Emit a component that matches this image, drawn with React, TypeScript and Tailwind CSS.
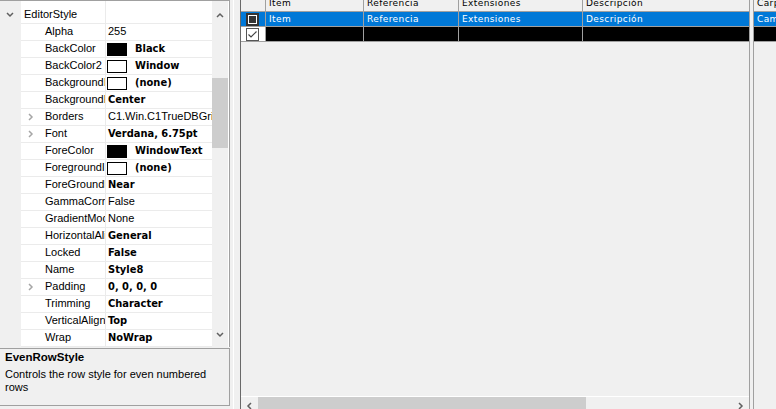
type Prop = {
  name: string
  value: string
  bold?: boolean
  swatch?: "black" | "white"
  expand?: boolean
}

const props: Prop[] = [
  { name: "Alpha", value: "255" },
  { name: "BackColor", value: "Black", bold: true, swatch: "black" },
  { name: "BackColor2", value: "Window", bold: true, swatch: "white" },
  { name: "BackgroundImage", value: "(none)", bold: true, swatch: "white" },
  { name: "BackgroundPictureDrawMode", value: "Center", bold: true },
  { name: "Borders", value: "C1.Win.C1TrueDBGrid.GridBorders", expand: true },
  { name: "Font", value: "Verdana, 6.75pt", bold: true, expand: true },
  { name: "ForeColor", value: "WindowText", bold: true, swatch: "black" },
  { name: "ForegroundImage", value: "(none)", bold: true, swatch: "white" },
  { name: "ForeGroundPicturePosition", value: "Near", bold: true },
  { name: "GammaCorrection", value: "False" },
  { name: "GradientMode", value: "None" },
  { name: "HorizontalAlignment", value: "General", bold: true },
  { name: "Locked", value: "False", bold: true },
  { name: "Name", value: "Style8", bold: true },
  { name: "Padding", value: "0, 0, 0, 0", bold: true, expand: true },
  { name: "Trimming", value: "Character", bold: true },
  { name: "VerticalAlignment", value: "Top", bold: true },
  { name: "Wrap", value: "NoWrap", bold: true },
]

const cols = [
  { title: "Item", w: "w-[98px]" },
  { title: "Referencia", w: "w-[95px]" },
  { title: "Extensiones", w: "w-[124px]" },
  { title: "Descripción", w: "w-[166px]" },
]

const Chevron = ({ dir, color }: { dir: "up" | "down" | "left" | "right"; color: string }) => {
  const pts = {
    up: "1,5 4,2 7,5",
    down: "1,1 4,4 7,1",
    left: "5,1 2,4 5,7",
    right: "2,1 5,4 2,7",
  }[dir]
  const size = dir === "up" || dir === "down" ? { w: 8, h: 6 } : { w: 7, h: 8 }
  return (
    <svg width={size.w} height={size.h} viewBox={`0 0 ${size.w} ${size.h}`} className="block">
      <polyline points={pts} fill="none" stroke={color} strokeWidth="1.5" />
    </svg>
  )
}

const PropRow = ({ p }: { p: Prop }) => (
  <div className="flex h-[17px]">
    <div className="w-[21px] shrink-0 bg-[#f0f0f0]" />
    <div className="flex flex-1 border-b border-[#ebebeb]">
      <div className="flex w-[85px] shrink-0 overflow-hidden whitespace-nowrap border-r border-[#ebebeb] leading-[15px]">
        <div className="flex w-[24px] shrink-0 items-center pl-[6px]">
          {p.expand && <Chevron dir="right" color="#a6a6a6" />}
        </div>
        <span>{p.name}</span>
      </div>
      <div className="flex w-[106px] items-center overflow-hidden whitespace-nowrap leading-[15px]">
        {p.swatch && (
          <div
            className={
              p.swatch === "black"
                ? "ml-[1px] mr-[8px] h-[13px] w-[20px] shrink-0 bg-black"
                : "ml-[1px] mr-[8px] h-[13px] w-[20px] shrink-0 border border-black bg-white"
            }
          />
        )}
        <span
          className={
            p.bold
              ? (p.swatch ? "" : "pl-[2px] ") +
                "mb-[1px] font-bold text-[11px] [font-family:'DejaVu_Sans_Condensed','DejaVu_Sans',sans-serif] [font-stretch:condensed]"
              : "mb-[1px] pl-[2px]"
          }
        >
          {p.value}
        </span>
      </div>
    </div>
  </div>
)

const PropertyGrid = () => (
  <div className="flex h-[347px] border-r border-t border-[#a0a0a0] bg-white">
    <div className="w-[212px] shrink-0">
      <div className="flex h-[6px]">
        <div className="w-[21px] bg-[#f0f0f0]" />
        <div className="w-[85px] border-r border-[#ebebeb]" />
      </div>
      <div className="flex h-[17px]">
        <div className="flex w-[21px] shrink-0 items-center justify-center bg-[#f0f0f0] pb-[1px] pr-[2px]">
          <Chevron dir="down" color="#5f5f5f" />
        </div>
        <div className="flex flex-1 border-b border-[#ebebeb]">
          <div className="w-[85px] border-r border-[#ebebeb] pl-[3px] leading-[15px]">EditorStyle</div>
        </div>
      </div>
      {props.map((p) => (
        <PropRow key={p.name} p={p} />
      ))}
    </div>
    <div className="flex w-[16px] flex-col items-center bg-[#f0f0f0] pb-[9px] pt-[11px]">
      <Chevron dir="up" color="#606060" />
      <div className="mt-[60px] h-[70px] w-[16px] bg-[#cdcdcd]" />
      <div className="flex-1" />
      <Chevron dir="down" color="#606060" />
    </div>
  </div>
)

const SelectedIcon = () => (
  <svg width="13" height="13" viewBox="0 0 13 13" className="block">
    <rect x="0" y="0" width="13" height="13" fill="#333" />
    <rect x="2" y="2" width="9" height="9" fill="#fff" />
    <rect x="3" y="3" width="7" height="7" fill="#333" />
  </svg>
)

const NewRowIcon = () => (
  <svg width="13" height="13" viewBox="0 0 13 13" className="block">
    <rect x="0.5" y="0.5" width="12" height="12" fill="#fff" stroke="#555" />
    <polyline points="2.5,6.5 5,9 10.5,3.5" fill="none" stroke="#444" strokeWidth="1.2" />
  </svg>
)

const DataGrid = () => (
  <div className="flex h-[409px] flex-1 border-l border-[#696969] text-[9px] tracking-[0.4px] [font-family:'DejaVu_Sans',Verdana,sans-serif]">
    <div className="flex w-[509px] shrink-0 flex-col border-r border-[#a0a0a0]">
      <div className="-mt-[4px] flex h-[16px] shrink-0 border-b border-[#a0a0a0] bg-[#f0f0f0] leading-[15px]">
        <div className="w-[25px] border-r border-[#a0a0a0]" />
        {cols.map((c, i) => (
          <div
            key={c.title}
            className={c.w + " overflow-hidden whitespace-nowrap pl-[3px] " + (i < 3 ? "border-r border-[#a0a0a0]" : "")}
          >
            {c.title}
          </div>
        ))}
      </div>
      <div className="flex h-[15px] shrink-0 border-b border-[#a0a0a0] bg-[#0078d7] leading-[14px] text-white">
        <div className="flex w-[25px] items-center pl-[5px] border-r border-[#a0a0a0]">
          <SelectedIcon />
        </div>
        {cols.map((c, i) => (
          <div
            key={c.title}
            className={c.w + " overflow-hidden whitespace-nowrap pl-[3px] " + (i < 3 ? "border-r border-[#a0a0a0]" : "")}
          >
            {c.title}
          </div>
        ))}
      </div>
      <div className="flex h-[15px] shrink-0 border-b border-[#a0a0a0] bg-black">
        <div className="flex w-[25px] items-center bg-white pl-[5px] border-r border-[#a0a0a0]">
          <NewRowIcon />
        </div>
        {cols.map((c, i) => (
          <div key={c.title} className={c.w + " " + (i < 3 ? "border-r border-[#a0a0a0]" : "")} />
        ))}
      </div>
      <div className="h-[355px] shrink-0 border-b border-white bg-[#f0f0f0]" />
      <div className="flex h-[17px] shrink-0 bg-[#f0f0f0]">
        <div className="flex w-[17px] items-center justify-center">
          <Chevron dir="left" color="#606060" />
        </div>
        <div className="w-[328px] bg-[#cdcdcd]" />
        <div className="flex-1" />
        <div className="flex w-[17px] items-center justify-center">
          <Chevron dir="right" color="#606060" />
        </div>
      </div>
    </div>
    <div className="w-[3px] shrink-0 bg-[#f0f0f0]" />
    <div className="flex flex-1 flex-col overflow-hidden border-l border-[#a0a0a0]">
      <div className="-mt-[4px] h-[16px] shrink-0 whitespace-nowrap border-b border-[#a0a0a0] bg-[#f0f0f0] pl-[3px] leading-[15px]">
        Carpeta
      </div>
      <div className="h-[15px] shrink-0 whitespace-nowrap border-b border-[#a0a0a0] bg-[#0078d7] pl-[3px] leading-[14px] text-white">
        Campo
      </div>
      <div className="h-[15px] shrink-0 border-b border-[#a0a0a0] bg-black" />
      <div className="flex-1 bg-[#f0f0f0]" />
    </div>
  </div>
)

const App = () => {
  return (
    <div className="flex h-[409px] w-[776px] overflow-hidden bg-[#f0f0f0] text-[11px] text-black [font-family:'Liberation_Sans',Arial,sans-serif]">
      <div className="flex w-[230px] shrink-0 flex-col">
        <PropertyGrid />
        <div className="mt-[1px] h-[58px] border-b border-r border-t border-[#a0a0a0] bg-[#f0f0f0] pl-[5px] pt-[2px]">
          <div className="text-[11.5px] font-bold leading-[13px]">EvenRowStyle</div>
          <div className="mt-[4px] w-[210px] leading-[13px]">Controls the row style for even numbered rows</div>
        </div>
      </div>
      <div className="flex w-[10px] shrink-0">
        <div className="w-[3px]" />
        <div className="w-px bg-white" />
      </div>
      <DataGrid />
    </div>
  )
}

export default App
